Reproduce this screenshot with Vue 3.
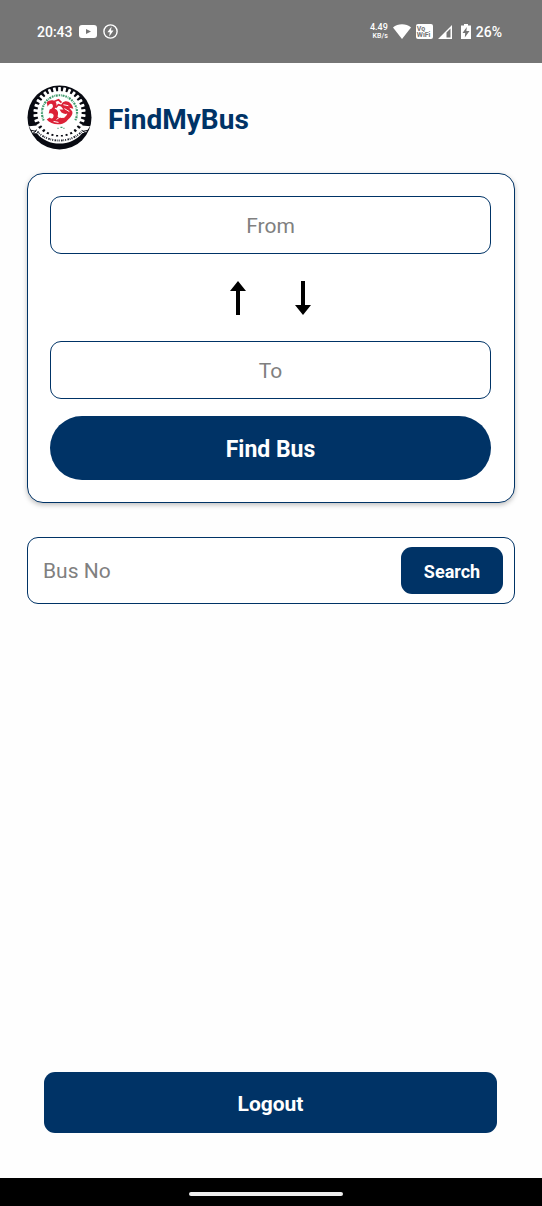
<script setup>
import { ref } from 'vue'

const from = ref('')
const to = ref('')
const busNo = ref('')

const toothAngles = Array.from({ length: 30 }, (_, i) => i * 12)

function swapStops() {
  const previous = from.value
  from.value = to.value
  to.value = previous
}
</script>

<template>
  <div class="screen">
    <header class="status">
      <div class="status-left">
        <span class="clock">20:43</span>
        <svg class="video" viewBox="0 0 18 13" aria-hidden="true">
          <rect width="18" height="13" rx="3" fill="#fff" />
          <path d="M7 4l5 2.5L7 9z" fill="#757575" />
        </svg>
        <svg class="bolt" viewBox="0 0 15 15" aria-hidden="true">
          <circle cx="7.5" cy="7.5" r="6.6" fill="none" stroke="#fff" stroke-width="1.4" />
          <path d="M8.6 2.6L4.4 8.2h2.4l-.6 4.2 4.3-5.9H8z" fill="#fff" />
        </svg>
      </div>
      <div class="status-right">
        <span class="speed"><b>4.49</b><small>KB/s</small></span>
        <svg class="wifi" viewBox="0 0 18 15" aria-hidden="true">
          <path d="M9 15L0 3.6C4.8-.8 13.2-.8 18 3.6z" fill="#fff" />
        </svg>
        <span class="vowifi"><span>Vo</span><span>WiFi</span></span>
        <svg class="signal" viewBox="0 0 14 14" aria-hidden="true">
          <path d="M14 0v14H0zM12.5 3.6L8.5 7.6v5h4z" fill="#fff" fill-rule="evenodd" />
        </svg>
        <svg class="battery" viewBox="0 0 10 15" aria-hidden="true">
          <path d="M3 0h4v1.500h3V15H0V1.500h3z" fill="#fff" />
          <path d="M5.800 3L1.500 9h2.700l-.4 4.500L8.500 7H5.400z" fill="#757575" />
        </svg>
        <span class="percent">26%</span>
      </div>
    </header>

    <main class="content">
      <div class="brand">
        <svg class="logo" viewBox="0 0 66 66" role="img" aria-label="FindMyBus emblem">
          <circle cx="33" cy="33" r="32.500" fill="#080a12" />
          <g fill="#fff">
            <rect
              v-for="angle in toothAngles"
              :key="angle"
              x="31.600"
              y="2"
              width="2.800"
              height="7"
              rx="0.600"
              :transform="`rotate(${angle} 33 28.500)`"
            />
            <circle cx="33" cy="28.500" r="22.500" />
          </g>
          <path
            d="M17 36A17.800 17.800 0 1 1 49 36"
            fill="none"
            stroke="#3f9a6c"
            stroke-width="2.200"
            stroke-dasharray="1.600 0.900 0.700 0.800 2 1"
          />
          <path d="M20 18C23 14 30 15 30 20C30 22 29 23 28 24C32 25 32 29 31 32C35 35 40 33 41 29C39 30 37 29 35 28L33 25L37 25L34 21L36 18C40 14 46 18 47 24L43 23L46 27C47 31 43 34 40 37C34 42 24 40 20 35L23 33C25 35 27 34 27 31C27 29 25 28 22 29L23 25C26 24 27 22 26 20C25 18 22 19 21 22Z" fill="#dc2238" />
          <path d="M27 17l5-2 3 3M29 23l3-3 3 1" fill="none" stroke="#dc2238" stroke-width="1.800" />
          <path d="M37 20l5 1M38 24l5 3M30 35l4-3 4 1M27 37l5 1" fill="none" stroke="#fff" stroke-width="1" />
          <path d="M31 44h1M34 43h2M37 44h1" stroke="#3f9a6c" stroke-width="1.200" />
          <path d="M2 42L10 41C20 56 46 56 56 41L64 42L60 48L56 49C45 63 21 63 10 49L6 49Z" fill="#fff" />
          <path
            d="M9 45.500C20 60 46 60 57 45.500"
            fill="none"
            stroke="#20242e"
            stroke-width="2"
            stroke-dasharray="1 1.400 1.600 0.800 0.700 1.100"
          />
          <path d="M4 46l5 1-3 2M62 46l-5 1 3 2" fill="none" stroke="#080a12" stroke-width="1" />
        </svg>
        <h1>FindMyBus</h1>
      </div>

      <form class="route-card" @submit.prevent>
        <input v-model="from" class="field" type="text" placeholder="From" aria-label="From" />
        <button class="swap" type="button" aria-label="Swap stops" @click="swapStops">
          <svg class="arrow" viewBox="0 0 18 34" aria-hidden="true">
            <path d="M9 0l8 10h-6v24H7V10H1z" />
          </svg>
          <svg class="arrow" viewBox="0 0 18 34" aria-hidden="true">
            <path d="M7 0h4v24h6L9 34 1 24h6z" />
          </svg>
        </button>
        <input v-model="to" class="field" type="text" placeholder="To" aria-label="To" />
        <button class="find" type="submit">Find Bus</button>
      </form>

      <form class="bus-search" @submit.prevent>
        <input v-model="busNo" type="text" placeholder="Bus No" aria-label="Bus No" />
        <button type="submit">Search</button>
      </form>

      <button class="logout" type="button">Logout</button>
    </main>

    <footer class="nav"><span class="handle"></span></footer>
  </div>
</template>

<style>
body {
  margin: 0;
  background: #fff;
}
</style>

<style scoped>
.screen {
  display: flex;
  flex-direction: column;
  min-height: 100vh;
  background: #fefefe;
  font-family: Roboto, "Liberation Sans", sans-serif;
}

.screen *,
.screen {
  box-sizing: border-box;
}

svg {
  display: block;
  flex: none;
}

.status {
  display: flex;
  justify-content: space-between;
  align-items: center;
  height: 63px;
  padding: 0 40px 0 37px;
  background: #757575;
  color: #fff;
  font-size: 14px;
  font-weight: 500;
}

.status-left,
.status-right {
  display: flex;
  align-items: center;
}

.status-left {
  gap: 6px;
}

.status-right {
  gap: 5px;
}

.video {
  width: 18px;
  height: 13px;
}

.bolt {
  width: 15px;
  height: 15px;
}

.speed {
  display: flex;
  flex-direction: column;
  align-items: flex-end;
  line-height: 9px;
}

.speed b {
  font-size: 9px;
  font-weight: 500;
}

.speed small {
  font-size: 7px;
}

.wifi {
  width: 18px;
  height: 15px;
}

.vowifi {
  display: flex;
  flex-direction: column;
  justify-content: center;
  width: 17px;
  height: 15px;
  padding-left: 1px;
  border-radius: 2px;
  background: #fff;
  color: #757575;
  font-size: 7px;
  font-weight: 700;
  line-height: 6px;
}

.signal {
  width: 14px;
  height: 14px;
}

.battery {
  width: 10px;
  height: 15px;
  margin-left: 4px;
}

.content {
  display: flex;
  flex: 1;
  flex-direction: column;
  padding: 22px 27px 45px;
}

.brand {
  display: flex;
  align-items: center;
  gap: 16px;
}

.logo {
  width: 65px;
  height: 65px;
}

h1 {
  margin: 4px 0 0;
  color: #003366;
  font-size: 28px;
  font-weight: 700;
  line-height: 32px;
}

input {
  min-width: 0;
  color: #222;
  font-family: inherit;
  font-size: 21px;
  outline-color: #003366;
}

input::placeholder {
  color: #808080;
  opacity: 1;
}

button {
  border: 0;
  background: #003366;
  color: #fff;
  font-family: inherit;
  font-weight: 700;
  cursor: pointer;
}

.route-card {
  display: flex;
  flex-direction: column;
  margin-top: 23px;
  padding: 22px 23px 22px 22px;
  border: 1px solid #003366;
  border-radius: 16px;
  background: #fff;
  box-shadow: 0 2px 5px rgba(0, 0, 0, 0.25);
}

.field {
  width: 100%;
  height: 58px;
  padding: 2px 16px 0;
  border: 1px solid #003366;
  border-radius: 11px;
  background: #fff;
  text-align: center;
}

.swap {
  display: flex;
  justify-content: center;
  gap: 47px;
  padding: 27px 0 26px;
  background: none;
}

.arrow {
  width: 18px;
  height: 34px;
}

.find {
  height: 64px;
  margin-top: 17px;
  padding-top: 3px;
  border-radius: 32px;
  font-size: 23px;
}

.bus-search {
  display: flex;
  align-items: center;
  height: 67px;
  margin-top: 34px;
  padding: 0 11px 0 15px;
  border: 1px solid #003366;
  border-radius: 11px;
  background: #fff;
}

.bus-search input {
  flex: 1;
  height: 47px;
  padding: 0;
  border: 0;
  background: none;
}

.bus-search button {
  width: 102px;
  height: 47px;
  padding-top: 3px;
  border-radius: 11px;
  font-size: 18px;
}

.logout {
  height: 61px;
  margin: auto 18px 0 17px;
  padding-top: 3px;
  border-radius: 11px;
  font-size: 21px;
}

.nav {
  display: flex;
  justify-content: center;
  align-items: center;
  height: 28px;
  padding: 4px 10px 0 0;
  background: #000;
}

.handle {
  width: 154px;
  height: 4px;
  border-radius: 2px;
  background: #eee;
}
</style>
